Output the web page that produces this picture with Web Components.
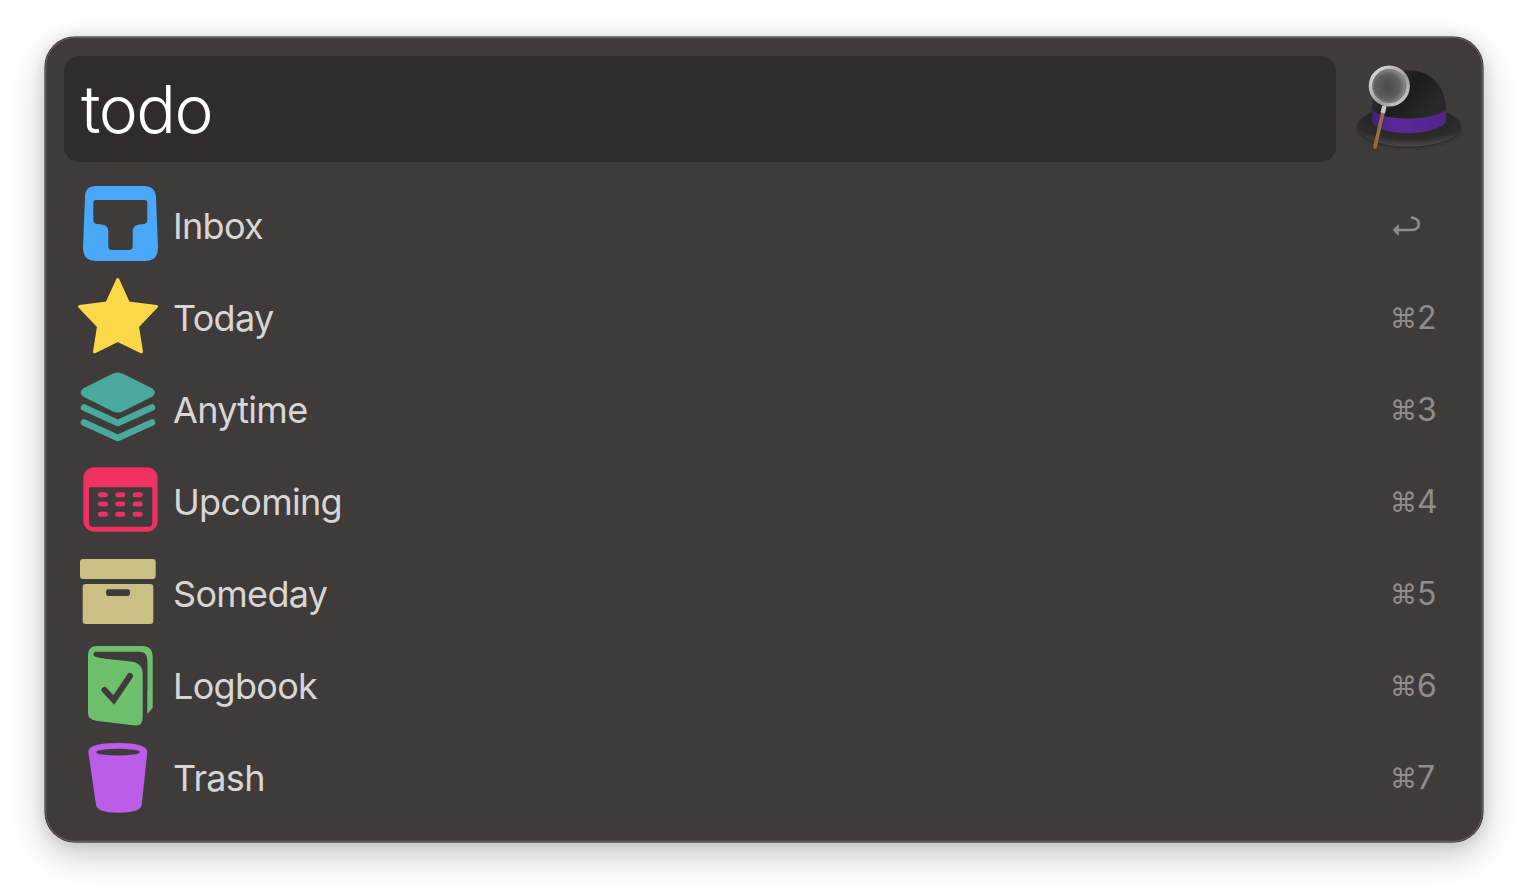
<!DOCTYPE html>
<html lang="en">
<head>
<meta charset="utf-8">
<title>todo</title>
<style>
  html, body { margin: 0; height: 100%; background: #fff; }
  body { font-family: Inter, "Liberation Sans", sans-serif; }
</style>
</head>
<body>
<launcher-window>
  <launcher-search slot="header" value="todo"></launcher-search>
  <launcher-hat slot="header"></launcher-hat>
  <result-row shortcut="return"><result-icon slot="icon" name="inbox"></result-icon>Inbox</result-row>
  <result-row shortcut="2"><result-icon slot="icon" name="today"></result-icon>Today</result-row>
  <result-row shortcut="3"><result-icon slot="icon" name="anytime"></result-icon>Anytime</result-row>
  <result-row shortcut="4"><result-icon slot="icon" name="upcoming"></result-icon>Upcoming</result-row>
  <result-row shortcut="5"><result-icon slot="icon" name="someday"></result-icon>Someday</result-row>
  <result-row shortcut="6"><result-icon slot="icon" name="logbook"></result-icon>Logbook</result-row>
  <result-row shortcut="7"><result-icon slot="icon" name="trash"></result-icon>Trash</result-row>
</launcher-window>
<script>
class LauncherWindow extends HTMLElement {
  constructor() {
    super();
    this._shadow = this.attachShadow({ mode: 'open' });
    this._shadow.innerHTML = `
      <style>
        :host { display: block; box-sizing: border-box; width: 1438px; height: 805px; margin: 37px 0 0 45px; padding: 19px 19px 0;
          background: #3f3b3a; border-radius: 30px;
          box-shadow: 0 0 0 .5px #1c1a1a, inset 0 0 0 1.5px #5d5a59, inset 0 1px 0 1px #2b2928, 0 12px 34px rgba(0,0,0,.24), 0 0 14px rgba(0,0,0,.1); }
        .hd { display: flex; height: 106px; }
        .list { display: flex; flex-direction: column; margin: 18px 0 0 10px; }
      </style>
      <div class="hd"><slot name="header"></slot></div>
      <div class="list"><slot></slot></div>
    `;
  }
}

class LauncherSearch extends HTMLElement {
  constructor() {
    super();
    this._shadow = this.attachShadow({ mode: 'open' });
  }
  connectedCallback() {
    this._shadow.innerHTML = `
      <style>
        :host { display: flex; align-items: center; box-sizing: border-box; width: 1272px; height: 106px; padding: 0 0 0 17px;
          background: #2f2d2b; border-radius: 15px; color: #fff; font: 300 66px/1 Inter, "Liberation Sans", sans-serif; letter-spacing: -1.5px; }
      </style>
      <span>${this.getAttribute('value') || ''}</span>
    `;
  }
}

class LauncherHat extends HTMLElement {
  constructor() {
    super();
    this._shadow = this.attachShadow({ mode: 'open' });
    this._shadow.innerHTML = `
      <style>
        :host { display: block; width: 128px; height: 106px; }
        svg { display: block; }
      </style>
      <svg width="128" height="106" viewBox="1336 56 128 106">
        <defs>
          <radialGradient id="brim" cx=".5" cy=".25" r=".75">
            <stop offset="0" stop-color="#1c1b1b"/><stop offset=".75" stop-color="#2d2c2b"/><stop offset="1" stop-color="#4a4847"/>
          </radialGradient>
          <linearGradient id="crown" x1="0" y1="0" x2=".9" y2=".6">
            <stop offset="0" stop-color="#3a3938"/><stop offset=".55" stop-color="#1d1c1c"/><stop offset="1" stop-color="#2a2929"/>
          </linearGradient>
          <linearGradient id="band" x1="0" y1="0" x2="1" y2="0">
            <stop offset="0" stop-color="#3f2370"/><stop offset=".3" stop-color="#5a2a98"/><stop offset="1" stop-color="#4f2688"/>
          </linearGradient>
          <radialGradient id="lens" cx=".45" cy=".52" r=".6">
            <stop offset="0" stop-color="#4b4a49"/><stop offset=".55" stop-color="#5f5e5d"/><stop offset="1" stop-color="#b4b3b2"/>
          </radialGradient>
          <linearGradient id="ring" x1="0" y1="0" x2="1" y2="1">
            <stop offset="0" stop-color="#e4e4e4"/><stop offset=".6" stop-color="#9a9a9a"/><stop offset="1" stop-color="#d8d8d8"/>
          </linearGradient>
          <filter id="soft" x="-20%" y="-20%" width="140%" height="140%"><feGaussianBlur stdDeviation="1.2"/></filter>
        </defs>
        <ellipse cx="1409" cy="128" rx="52" ry="20" fill="#2b2928" filter="url(#soft)"/>
        <ellipse cx="1409" cy="126.500" rx="51.700" ry="20" fill="url(#brim)"/>
        <path d="M1371.700 110 C1372 86 1390 70 1409 70 C1430 70 1446 86 1446 110 L1446 117 C1446 130 1372 137 1371.700 117 Z" fill="url(#crown)"/>
        <path d="M1372 110 C1385 121 1430 122 1446 110 L1446 122 C1436 136 1382 138 1372 122 Z" fill="url(#band)"/>
        <path d="M1383.500 110 L1375 147" stroke="#9a6b42" stroke-width="3.600" stroke-linecap="round"/>
        <path d="M1384.400 106 L1382.700 113" stroke="#c9c8c6" stroke-width="4.500"/>
        <circle cx="1389.300" cy="86" r="18.800" fill="url(#lens)" stroke="url(#ring)" stroke-width="3.500"/>
        <circle cx="1389.300" cy="86" r="16.500" fill="none" stroke="#7b7a79" stroke-width="1"/>
      </svg>
    `;
  }
}

// icon drawings are in page coordinates, the viewBox of each one says which row box it sits in
const RESULT_ICONS = {
  inbox: { y: 180, body: `
    <path fill="#4aa8fb" fill-rule="evenodd" d="M96 186 L144 186 Q155 186 156 197 L158 248 Q158 261 145 261 L96 261 Q83 261 83 248 L85 197 Q85 186 96 186 Z
      M96 200 Q93.300 200 93.300 203 L93.300 220 Q93.300 223.500 97 224 L102 224.500 Q108.300 225 108.300 232 L108.300 246 Q108.300 250 112 250 L129 250 Q132.700 250 132.700 246 L132.700 232 Q132.700 225 139 224.500 L144 224 Q147.300 223.500 147.300 220 L147.300 203 Q147.300 200 144 200 Z"/>` },
  today: { y: 272, body: `
    <path fill="#fbd848" stroke="#fbd848" stroke-width="3" stroke-linejoin="round" d="M117.800 279.500 L128.500 303 L156.500 306.500 L137.500 326.500 L141.500 351.800 L117.800 340.500 L94.500 351.800 L98.500 326.500 L79.500 306.500 L107 303 Z"/>` },
  anytime: { y: 364, body: `
    <path fill="#4aa99d" d="M112 374 Q117.800 371 123.500 374 L152.500 388.500 Q157 392.500 152.500 396.500 L123.500 411 Q117.800 414 112 411 L83 396.500 Q78.500 392.500 83 388.500 Z"/>
    <path fill="none" stroke="#4aa99d" stroke-width="6.500" stroke-linecap="round" stroke-linejoin="round" d="M84 407.500 L117.800 423 L152 407.500"/>
    <path fill="none" stroke="#4aa99d" stroke-width="6.500" stroke-linecap="round" stroke-linejoin="round" d="M84 422.500 L117.800 438 L152 422.500"/>` },
  upcoming: { y: 456, body: `
    <rect x="83.300" y="467.300" width="74.400" height="64.400" rx="11" fill="#ee3062"/>
    <path fill="#3f3b3a" d="M89 487.300 L152.300 487.300 L152.300 522.500 Q152.300 526.700 148 526.700 L93 526.700 Q89 526.700 89 522.500 Z"/>
    <g fill="#ee3062">
      <rect x="98" y="492.200" width="10" height="5" rx="2.500"/><rect x="115.300" y="492.200" width="10" height="5" rx="2.500"/><rect x="132.700" y="492.200" width="10" height="5" rx="2.500"/>
      <rect x="98" y="501.500" width="10" height="5" rx="2.500"/><rect x="115.300" y="501.500" width="10" height="5" rx="2.500"/><rect x="132.700" y="501.500" width="10" height="5" rx="2.500"/>
      <rect x="98" y="511.800" width="10" height="5" rx="2.500"/><rect x="115.300" y="511.800" width="10" height="5" rx="2.500"/><rect x="132.700" y="511.800" width="10" height="5" rx="2.500"/>
    </g>` },
  someday: { y: 548, body: `
    <rect x="80" y="559" width="75.700" height="20" rx="3" fill="#cbc084"/>
    <path fill="#cbc084" fill-rule="evenodd" d="M85.700 584 L150.300 584 Q153.300 584 153.300 587 L153.300 621 Q153.300 624 150.300 624 L85.700 624 Q82.700 624 82.700 621 L82.700 587 Q82.700 584 85.700 584 Z
      M108 589.300 Q106 589.300 106 592.600 Q106 596 108 596 L128 596 Q130 596 130 592.600 Q130 589.300 128 589.300 Z"/>` },
  logbook: { y: 640, body: `
    <path fill="#6dbf6e" d="M88 662 L88 655 Q88 646 97 646 L142 646 Q152.700 646 152.700 657 L152.700 708 L147.300 714 L147.300 662 Z"/>
    <path fill="#3f3b3a" d="M95 651.700 L139 651.700 Q147.300 651.700 147.300 660 L147.300 690 L130 690 L130 664 L95 656.700 Q91.800 654.200 95 651.700 Z"/>
    <path fill="#6dbf6e" d="M88 657 L131 661.500 Q142.700 663 142.700 674 L142.700 718 Q142.700 726 135 725.500 L96 720.800 Q88 719.500 88 713 Z"/>
    <path fill="none" stroke="#3f3b3a" stroke-width="6" stroke-linecap="round" stroke-linejoin="miter" d="M104.500 690 L113.800 700 L130 676"/>` },
  trash: { y: 732, body: `
    <path fill="#bb5de8" d="M88.300 752 Q88.300 743 118 743 Q147.300 743 147.300 752 L141.700 805 Q140.500 812.700 118 812.700 Q97.500 812.700 96 805 Z"/>
    <ellipse cx="118" cy="752.200" rx="21.700" ry="3.400" fill="#3f3b3a"/>` }
};

class ResultIcon extends HTMLElement {
  constructor() {
    super();
    this._shadow = this.attachShadow({ mode: 'open' });
  }
  connectedCallback() {
    const icon = RESULT_ICONS[this.getAttribute('name')];
    this._shadow.innerHTML = `
      <style>
        :host { display: block; width: 92px; height: 92px; }
        svg { display: block; }
      </style>
      <svg width="92" height="92" viewBox="74 ${icon.y} 92 92">${icon.body}</svg>
    `;
  }
}

class ResultRow extends HTMLElement {
  constructor() {
    super();
    this._shadow = this.attachShadow({ mode: 'open' });
  }
  connectedCallback() {
    const key = this.getAttribute('shortcut');
    const hint = key === 'return'
      ? `<svg width="30" height="24" viewBox="1388 214 30 24"><path fill="none" stroke="#8f8d8c" stroke-width="2.600" d="M1395 230 L1409.500 230 Q1416.700 230 1416.700 224 Q1416.700 218 1409 217.500"/><path fill="#8f8d8c" d="M1390.700 230 L1396.800 224 L1396.800 236 Z"/></svg>`
      : `<span class="cmd">⌘</span><span>${key}</span>`;
    this._shadow.innerHTML = `
      <style>
        :host { display: flex; align-items: center; height: 92px; }
        .title { flex: 1; margin-left: 7px; color: #d8d6d5; font: 400 36px/1 Inter, "Liberation Sans", sans-serif; letter-spacing: -.7px; }
        .key { display: flex; align-items: center; width: 74px; color: #8f8d8c; font: 400 32px/1 Inter, "Liberation Sans", sans-serif; }
        .cmd { font-family: "DejaVu Sans", sans-serif; font-size: 27px; }
        svg { display: block; }
      </style>
      <slot name="icon"></slot>
      <div class="title"><slot></slot></div>
      <div class="key">${hint}</div>
    `;
  }
}

customElements.define('launcher-window', LauncherWindow);
customElements.define('launcher-search', LauncherSearch);
customElements.define('launcher-hat', LauncherHat);
customElements.define('result-icon', ResultIcon);
customElements.define('result-row', ResultRow);
</script>
</body>
</html>
